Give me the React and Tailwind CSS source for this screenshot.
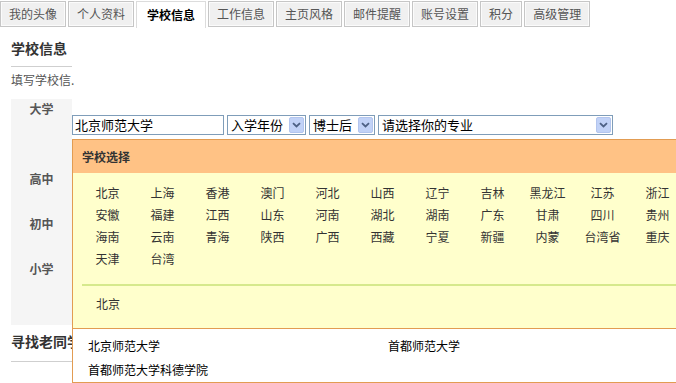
import React from 'react';

const tabs = ['我的头像', '个人资料', '学校信息', '工作信息', '主页风格', '邮件提醒', '账号设置', '积分', '高级管理'];

const provinces = [
    '北京', '上海', '香港', '澳门', '河北', '山西', '辽宁', '吉林', '黑龙江', '江苏', '浙江',
    '安徽', '福建', '江西', '山东', '河南', '湖北', '湖南', '广东', '甘肃', '四川', '贵州',
    '海南', '云南', '青海', '陕西', '广西', '西藏', '宁夏', '新疆', '内蒙', '台湾省', '重庆',
    '天津', '台湾'
];

const schools = ['北京师范大学', '首都师范大学', '首都师范大学科德学院'];

// XP style select box
const Select = ({ label, width }) => (
    <div className={`${width} h-[20px] border border-[#7f9db9] bg-white flex items-center justify-between pl-[3px] pr-[1px]`}>
        <span className="text-[13px] leading-[18px] text-black whitespace-nowrap">{label}</span>
        <span className="w-[15px] h-[16px] rounded-[2px] bg-[#c1d2f7] border border-[#b3c5ee] flex items-center justify-center">
            <svg width="9" height="6" viewBox="0 0 9 6">
                <path d="M1 1.2 L4.5 4.5 L8 1.2" fill="none" stroke="#4d6185" strokeWidth="1.8" />
            </svg>
        </span>
    </div>
);

const App = () => {
    return (
        <div className="relative w-[676px] h-[383px] overflow-hidden bg-white font-['Noto_Sans_CJK_SC','Noto_Sans',sans-serif] text-[12px] text-[#333]">
            {/* tabs */}
            <div className="flex gap-[2px] pt-[1px] h-[28px]">
                {tabs.map((t) => (
                    t === '学校信息' ? (
                        <div key={t} className="h-[27px] px-[10px] flex items-center bg-white border-x border-t border-[#dcdcdc] font-bold text-black">
                            {t}
                        </div>
                    ) : (
                        <div key={t} className="h-[26px] px-[8px] flex items-center bg-[#f0f0f0] border border-[#c6c6c6] shadow-[inset_0_0_0_1px_#fbfbfb] text-[#555]">
                            {t}
                        </div>
                    )
                ))}
            </div>

            <div className="px-[11px]">
                <div className="w-[61px] mt-[12px] pb-[10px] border-b border-[#cfcfcf] text-[14px] leading-[16px] font-bold text-[#333] whitespace-nowrap">学校信息</div>
                <div className="mt-[5px] leading-[16px] text-[#555] whitespace-nowrap">填写学校信.</div>

                {/* form */}
                <div className="mt-[11px] flex h-[226px]">
                    <div className="w-[61px] bg-[#f5f5f5] flex flex-col font-bold text-[#555] text-center">
                        <div className="h-[70px] pt-[3px] leading-[14px]">大学</div>
                        <div className="h-[45px] pt-[3px] leading-[14px]">高中</div>
                        <div className="h-[45px] pt-[3px] leading-[14px]">初中</div>
                        <div className="h-[66px] pt-[3px] leading-[14px]">小学</div>
                    </div>
                    <div className="flex-1">
                        <div className="mt-[16px] flex gap-[3px]">
                            <div className="w-[152px] h-[20px] border border-[#7f9db9] bg-white pl-[2px] text-[13px] leading-[18px] text-black">北京师范大学</div>
                            <Select label="入学年份" width="w-[79px]" />
                            <Select label="博士后" width="w-[66px]" />
                            <Select label="请选择你的专业" width="w-[235px]" />
                        </div>
                    </div>
                </div>

                <div className="mt-[8px] pb-[12px] border-b border-[#cfcfcf] text-[14px] leading-[16px] font-bold text-[#333]">寻找老同学</div>
            </div>

            {/* school picker popup */}
            <div className="absolute left-[72px] top-[139px] w-[640px] border border-[#e29c52] bg-white">
                <div className="h-[33px] bg-[#ffc285] pl-[9px] flex items-center font-bold text-[#333]">学校选择</div>
                <div className="bg-[#ffffcc] pt-[9px] pb-[12px] border-b border-[#e29c52]">
                    <div className="grid grid-cols-[repeat(11,55px)] pl-[7px]">
                        {provinces.map((p) => (
                            <div key={p} className="h-[22px] leading-[22px] text-center text-[#333]">{p}</div>
                        ))}
                    </div>
                    <div className="mt-[14px] ml-[9px] h-[2px] bg-[#d6e98c]" />
                    <div className="mt-[6px] h-[24px] leading-[24px] pl-[23px] text-[#333]">北京</div>
                </div>
                <div className="pt-[5px] pl-[15px] grid grid-cols-[300px_300px]">
                    {schools.map((s) => (
                        <div key={s} className="h-[24px] leading-[24px] text-black">{s}</div>
                    ))}
                </div>
            </div>
        </div>
    );
};

export default App;
